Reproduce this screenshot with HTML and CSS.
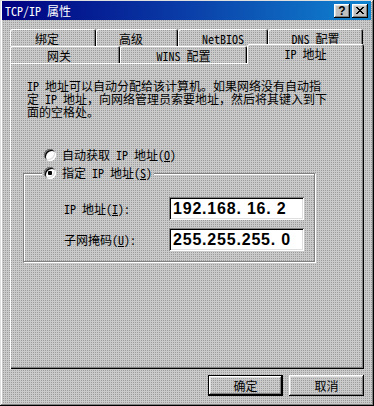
FILE: index.html
```html
<!DOCTYPE html>
<html lang="zh-CN">
<head>
<meta charset="utf-8">
<title>TCP/IP 属性</title>
<link rel="stylesheet" href="styles.css">
</head>
<body>
<div class="window dither">
  <div class="titlebar">
    <span class="title">TCP/IP 属性</span>
    <div class="tb-buttons">
      <span class="tb-btn help">?</span>
      <span class="tb-btn close"><svg width="8" height="7" viewBox="0 0 8 7" shape-rendering="crispEdges"><path d="M0 0h2v1h-2z M6 0h2v1h-2z M1 1h2v1h-2z M5 1h2v1h-2z M2 2h4v1h-4z M3 3h2v1h-2z M2 4h4v1h-4z M1 5h2v1h-2z M5 5h2v1h-2z M0 6h2v1h-2z M6 6h2v1h-2z" fill="#000"/></svg></span>
    </div>
  </div>
  <div class="body">
    <div class="tabs">
      <div class="tab-row">
        <div class="tab tab-cn w-bind">绑定</div>
        <div class="tab tab-cn w-adv">高级</div>
        <div class="tab w-netbios">NetBIOS</div>
        <div class="tab w-dns">DNS 配置</div>
      </div>
      <div class="tab-row">
        <div class="tab tab-cn w-gw">网关</div>
        <div class="tab w-wins">WINS 配置</div>
        <div class="tab active dither w-ip">IP 地址</div>
      </div>
    </div>
    <div class="panel">
      <p class="desc">IP 地址可以自动分配给该计算机。如果网络没有自动指定 IP 地址，向网络管理员索要地址，然后将其键入到下面的空格处。</p>
      <div class="radio-row"><span class="radio"></span><span>自动获取 IP 地址(<u>O</u>)</span></div>
      <div class="group">
        <div class="group-title dither"><span class="radio checked"></span><span>指定 IP 地址(<u>S</u>)</span></div>
        <div class="field-row">
          <span class="field-label">IP 地址(<u>I</u>):</span>
          <div class="ipbox">192.168. 16. 2</div>
        </div>
        <div class="field-row">
          <span class="field-label">子网掩码(<u>U</u>):</span>
          <div class="ipbox">255.255.255. 0</div>
        </div>
      </div>
    </div>
    <div class="actions">
      <div class="btn default">确定</div>
      <div class="btn">取消</div>
    </div>
  </div>
</div>
</body>
</html>
```
FILE: styles.css
```css
* { box-sizing: border-box; }
html, body { margin: 0; padding: 0; }
body {
  width: 374px;
  height: 406px;
  overflow: hidden;
  font-family: "Noto Sans Mono CJK SC", "Noto Sans CJK SC", "DejaVu Sans Mono", monospace;
  font-size: 12px;
  color: #000;
  background: #c0c0c0;
}
.dither {
  background-color: #cacaca;
  background-image: conic-gradient(#9c9c9c 25%, #cacaca 0);
  background-size: 2px 2px;
  background-attachment: fixed;
}
.window {
  width: 374px;
  height: 406px;
  padding: 1px 3px 3px 2px;
  display: flex;
  flex-direction: column;
  box-shadow: inset -1px -1px #000, inset 1px 1px #dfdfdf, inset -2px -2px #808080, inset 2px 2px #fff;
}
.titlebar {
  height: 19px;
  flex: none;
  display: flex;
  align-items: center;
  justify-content: space-between;
  padding: 0 3px 0 3px;
  background: linear-gradient(90deg, #000080 0%, #0a3ea8 50%, #1084d0 100%);
  color: #fff;
}
.title { line-height: 14px; }
.tb-buttons { display: flex; gap: 2px; }
.tb-btn {
  width: 16px;
  height: 14px;
  background: #c0c0c0;
  box-shadow: inset -1px -1px #000, inset 1px 1px #fff, inset -2px -2px #808080, inset 2px 2px #dfdfdf;
  display: flex;
  align-items: center;
  justify-content: center;
  color: #000;
}
.help {
  font-family: "Liberation Sans", sans-serif;
  font-weight: bold;
  font-size: 12px;
  line-height: 12px;
}
.close svg { display: block; margin-top: -1px; }

.body {
  flex: 1;
  display: flex;
  flex-direction: column;
  padding: 9px 7px 0 8px;
}
.tab-row {
  display: flex;
  align-items: flex-start;
  height: 17px;
}
.tab {
  height: 17px;
  flex: none;
  text-align: center;
  line-height: 17px;
  padding-top: 1px;
  border-radius: 2px 2px 0 0;
  box-shadow: inset 1px 1px #fff, inset -1px 0 #000, inset -2px 0 #808080;
}
.tab-cn { padding-right: 12px; }
.w-bind { width: 86px; }
.w-adv { width: 82px; }
.w-netbios { width: 90px; }
.w-dns { width: 95px; }
.w-gw { width: 110px; }
.w-wins { width: 127px; }
.w-ip { width: 117px; }
.tab.active {
  position: relative;
  z-index: 1;
  height: 20px;
  margin-top: -2px;
}

.panel {
  height: 306px;
  flex: none;
  display: flex;
  flex-direction: column;
  align-items: flex-start;
  padding-top: 16px;
  box-shadow: inset 1px 1px #fff, inset -1px -1px #000, inset -2px -2px #808080;
}
.desc {
  margin: 0 0 0 17px;
  width: 302px;
  line-height: 13px;
}
.radio-row {
  margin: 30px 0 0 34px;
  height: 14px;
  display: flex;
  align-items: center;
  gap: 6px;
  line-height: 14px;
}
.radio {
  position: relative;
  width: 12px;
  height: 12px;
  flex: none;
  border-radius: 50%;
  background: #fff;
  box-shadow: inset 1px 1px #808080, inset -1px -1px #fff, inset 2px 2px #000, inset -2px -2px #dfdfdf;
}
.radio.checked::after {
  content: "";
  position: absolute;
  left: 4px;
  top: 4px;
  width: 4px;
  height: 4px;
  border-radius: 1px;
  background: #000;
}
.group {
  position: relative;
  margin: 11px 0 0 13px;
  width: 292px;
  padding: 23px 0 10px 0;
  border: 1px solid #808080;
  box-shadow: inset 1px 1px #fff, 1px 1px #fff;
}
.group-title {
  position: absolute;
  top: -8px;
  left: 18px;
  height: 14px;
  padding: 0 2px;
  display: flex;
  align-items: center;
  gap: 6px;
  line-height: 14px;
}
.field-row {
  display: flex;
  align-items: center;
  margin-left: 40px;
}
.field-row + .field-row { margin-top: 8px; }
.field-label {
  width: 105px;
  line-height: 14px;
}
.ipbox {
  width: 135px;
  height: 23px;
  background: #fff;
  box-shadow: inset 1px 1px #808080, inset -1px -1px #fff, inset 2px 2px #000, inset -2px -2px #dfdfdf;
  padding-left: 4px;
  font-family: "Liberation Sans", sans-serif;
  font-weight: bold;
  font-size: 16px;
  letter-spacing: 0.8px;
  line-height: 23px;
  white-space: pre;
}
.actions {
  display: flex;
  justify-content: flex-end;
  gap: 6px;
  margin-top: 6px;
}
.btn {
  width: 75px;
  height: 21px;
  text-align: center;
  line-height: 21px;
  box-shadow: inset -1px -1px #000, inset 1px 1px #fff, inset -2px -2px #808080, inset 2px 2px #dfdfdf;
}
.btn.default {
  box-shadow: inset 0 0 0 1px #000, inset -2px -2px #000, inset 2px 2px #fff, inset -3px -3px #808080, inset 3px 3px #dfdfdf;
}
```
